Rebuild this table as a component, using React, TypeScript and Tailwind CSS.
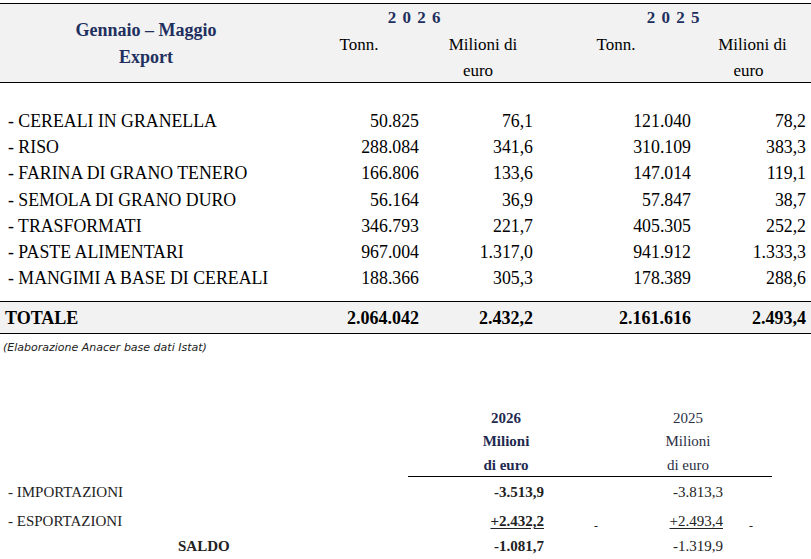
const rows = [
  ["- CEREALI IN GRANELLA", "50.825", "76,1", "121.040", "78,2"],
  ["- RISO", "288.084", "341,6", "310.109", "383,3"],
  ["- FARINA DI GRANO TENERO", "166.806", "133,6", "147.014", "119,1"],
  ["- SEMOLA DI GRANO DURO", "56.164", "36,9", "57.847", "38,7"],
  ["- TRASFORMATI", "346.793", "221,7", "405.305", "252,2"],
  ["- PASTE ALIMENTARI", "967.004", "1.317,0", "941.912", "1.333,3"],
  ["- MANGIMI A BASE DI CEREALI", "188.366", "305,3", "178.389", "288,6"],
];

const grid = "grid grid-cols-[300px_123px_114px_158px_115px]";
const num = "text-right pr-1";

export default function App() {
  return (
    <div className="w-[811px] h-[559px] bg-white text-black overflow-hidden font-['Liberation_Serif',serif]">
      {/* export table header */}
      <div className={`${grid} mt-[3px] h-[80px] border-y border-black bg-[#f2f2f2] text-[17px]`}>
        <div className="flex flex-col items-center justify-center font-bold text-[#1f3060] text-[18px] leading-[27px] pr-2">
          <div>Gennaio – Maggio</div>
          <div>Export</div>
        </div>
        <div className="col-span-2 grid grid-cols-[123px_114px] grid-rows-[27px_27px_26px]">
          <div className="col-span-2 flex items-center justify-center font-bold text-[#1f3060] tracking-[1px] pr-2">2 0 2 6</div>
          <div className="flex items-center justify-center pr-[5px]">Tonn.</div>
          <div className="flex items-center justify-center pl-[6px]">Milioni di</div>
          <div />
          <div className="flex items-center justify-center pr-1">euro</div>
        </div>
        <div className="col-span-2 grid grid-cols-[158px_115px] grid-rows-[27px_27px_26px]">
          <div className="col-span-2 flex items-center justify-center font-bold text-[#1f3060] tracking-[1px]">2 0 2 5</div>
          <div className="flex items-center justify-center">Tonn.</div>
          <div className="flex items-center justify-center">Milioni di</div>
          <div />
          <div className="flex items-center justify-center pr-2">euro</div>
        </div>
      </div>

      {/* rows */}
      <div className="pt-[25px] pb-[10px] text-[17.8px]">
        {rows.map((r) => (
          <div key={r[0]} className={`${grid} h-[26.2px] items-center`}>
            <div className="pl-2">{r[0]}</div>
            <div className={num}>{r[1]}</div>
            <div className={num}>{r[2]}</div>
            <div className={num}>{r[3]}</div>
            <div className={num}>{r[4]}</div>
          </div>
        ))}
      </div>

      <div className={`${grid} h-[33px] items-center border-y border-black bg-[#f2f2f2] pt-[2px] text-[18px] font-bold`}>
        <div className="pl-[5px]">TOTALE</div>
        <div className={num}>2.064.042</div>
        <div className={num}>2.432,2</div>
        <div className={num}>2.161.616</div>
        <div className={num}>2.493,4</div>
      </div>

      <div className="pl-[3px] pt-[6px] text-[11px] italic text-[#222] font-['DejaVu_Sans',sans-serif]">
        (Elaborazione Anacer base dati Istat)
      </div>

      {/* saldo table */}
      <div className="mt-[50px] text-[15px] leading-[23.5px]">
        <div className="grid grid-cols-[440px_132px_58px_116px]">
          <div />
          <div className="text-center font-bold text-[#1f2a50]">
            <div>2026</div>
            <div>Milioni</div>
            <div>di euro</div>
          </div>
          <div />
          <div className="text-center text-[#2a2f45]">
            <div>2025</div>
            <div>Milioni</div>
            <div>di euro</div>
          </div>
        </div>
        <div className="ml-[408px] mt-[-1px] w-[364px] border-t border-black" />
        <div className="grid grid-cols-[440px_132px_58px_116px_30px] grid-rows-[30px_27px_24px] items-center text-[#222] leading-[22px]">
          <div className="pl-2">- IMPORTAZIONI</div>
          <div className="text-right pr-[28px] font-bold">-3.513,9</div>
          <div />
          <div className="text-right pr-[23px]">-3.813,3</div>
          <div />

          <div className="pl-2">- ESPORTAZIONI</div>
          <div className="text-right pr-[28px] font-bold underline underline-offset-2">+2.432,2</div>
          <div className="pl-[22px] pt-[10px] text-[12px]">-</div>
          <div className="text-right pr-[23px] underline underline-offset-2">+2.493,4</div>
          <div className="pl-[3px] pt-[10px] text-[12px]">-</div>

          <div className="pl-[178px] font-bold">SALDO</div>
          <div className="text-right pr-[28px] font-bold">-1.081,7</div>
          <div />
          <div className="text-right pr-[23px]">-1.319,9</div>
          <div />
        </div>
      </div>
    </div>
  );
}
